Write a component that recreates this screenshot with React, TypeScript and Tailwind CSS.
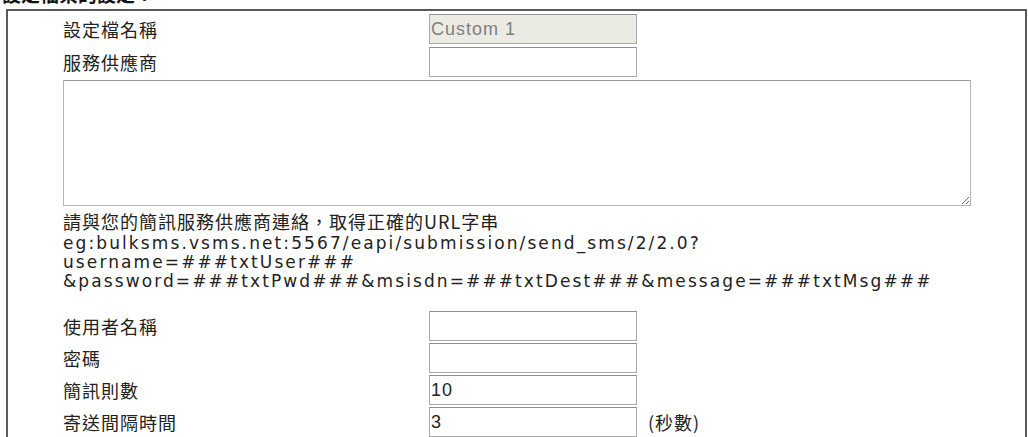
import React from "react";

const cjk = "font-['Noto_Sans_CJK_TC','Noto_Sans_CJK_SC',sans-serif]";

function Field({ value, disabled }: { value?: string; disabled?: boolean }) {
  return (
    <input
      readOnly
      value={value ?? ""}
      disabled={disabled}
      className={
        "w-[208px] h-[30px] px-[1px] border border-[#aaaaaa] border-t-[#8f8f8f] text-[18px] tracking-[1px] font-['Liberation_Sans',Arial,sans-serif] outline-none " +
        (disabled ? "bg-[#ebebe4] text-[#808080]" : "bg-white text-[#222]")
      }
    />
  );
}

function Row({ label, children }: { label: string; children: React.ReactNode }) {
  return (
    <div className="flex items-center h-[32px]">
      <div className={`w-[366px] text-[18px] tracking-[1px] text-[#222] ${cjk}`}>{label}</div>
      {children}
    </div>
  );
}

export default function App() {
  return (
    <div className="w-[1028px] h-[437px] overflow-hidden bg-white">
      {/* 標題只露出下半部 */}
      <div className="h-[9px] overflow-hidden">
        <div className={`-mt-[16px] pl-[2px] text-[19px] font-bold text-[#111] leading-[20px] ${cjk}`}>
          設定檔案的設定：
        </div>
      </div>

      <div className="ml-[6px] w-[1021px] h-[440px] border-2 border-[#5a5a5a] border-b-0 pl-[55px] pt-[3px]">
        <div className="flex flex-col gap-[3px]">
          <div className="flex items-center h-[30px]">
            <div className={`w-[366px] text-[18px] tracking-[1px] text-[#222] ${cjk}`}>設定檔名稱</div>
            <Field value="Custom 1" disabled />
          </div>
          <div className="flex items-center h-[30px]">
            <div className={`w-[366px] text-[18px] tracking-[1px] text-[#222] ${cjk}`}>服務供應商</div>
            <Field />
          </div>
          <textarea
            readOnly
            className="w-[908px] h-[126px] border border-[#b5b5b5] border-t-[#999] bg-white outline-none"
          />
        </div>

        <div className="mt-[3px] text-[#222]">
          <div className={`h-[25px] leading-[25px] text-[18px] tracking-[1px] ${cjk}`}>請與您的簡訊服務供應商連絡，取得正確的URL字串</div>
          <div className="leading-[19px] font-['DejaVu_Sans',Verdana,sans-serif] text-[17px] tracking-[2.1px]">
            <div>eg:bulksms.vsms.net:5567/eapi/submission/send_sms/2/2.0?</div>
            <div>username=###txtUser###</div>
            <div>&amp;password=###txtPwd###&amp;msisdn=###txtDest###&amp;message=###txtMsg###</div>
          </div>
        </div>

        <div className="mt-[19px]">
          <Row label="使用者名稱">
            <Field />
          </Row>
          <Row label="密碼">
            <Field />
          </Row>
          <Row label="簡訊則數">
            <Field value="10" />
          </Row>
          <Row label="寄送間隔時間">
            <Field value="3" />
            <span className={`ml-[11px] text-[18px] tracking-[1px] text-[#222] ${cjk}`}>(秒數)</span>
          </Row>
        </div>
      </div>
    </div>
  );
}
